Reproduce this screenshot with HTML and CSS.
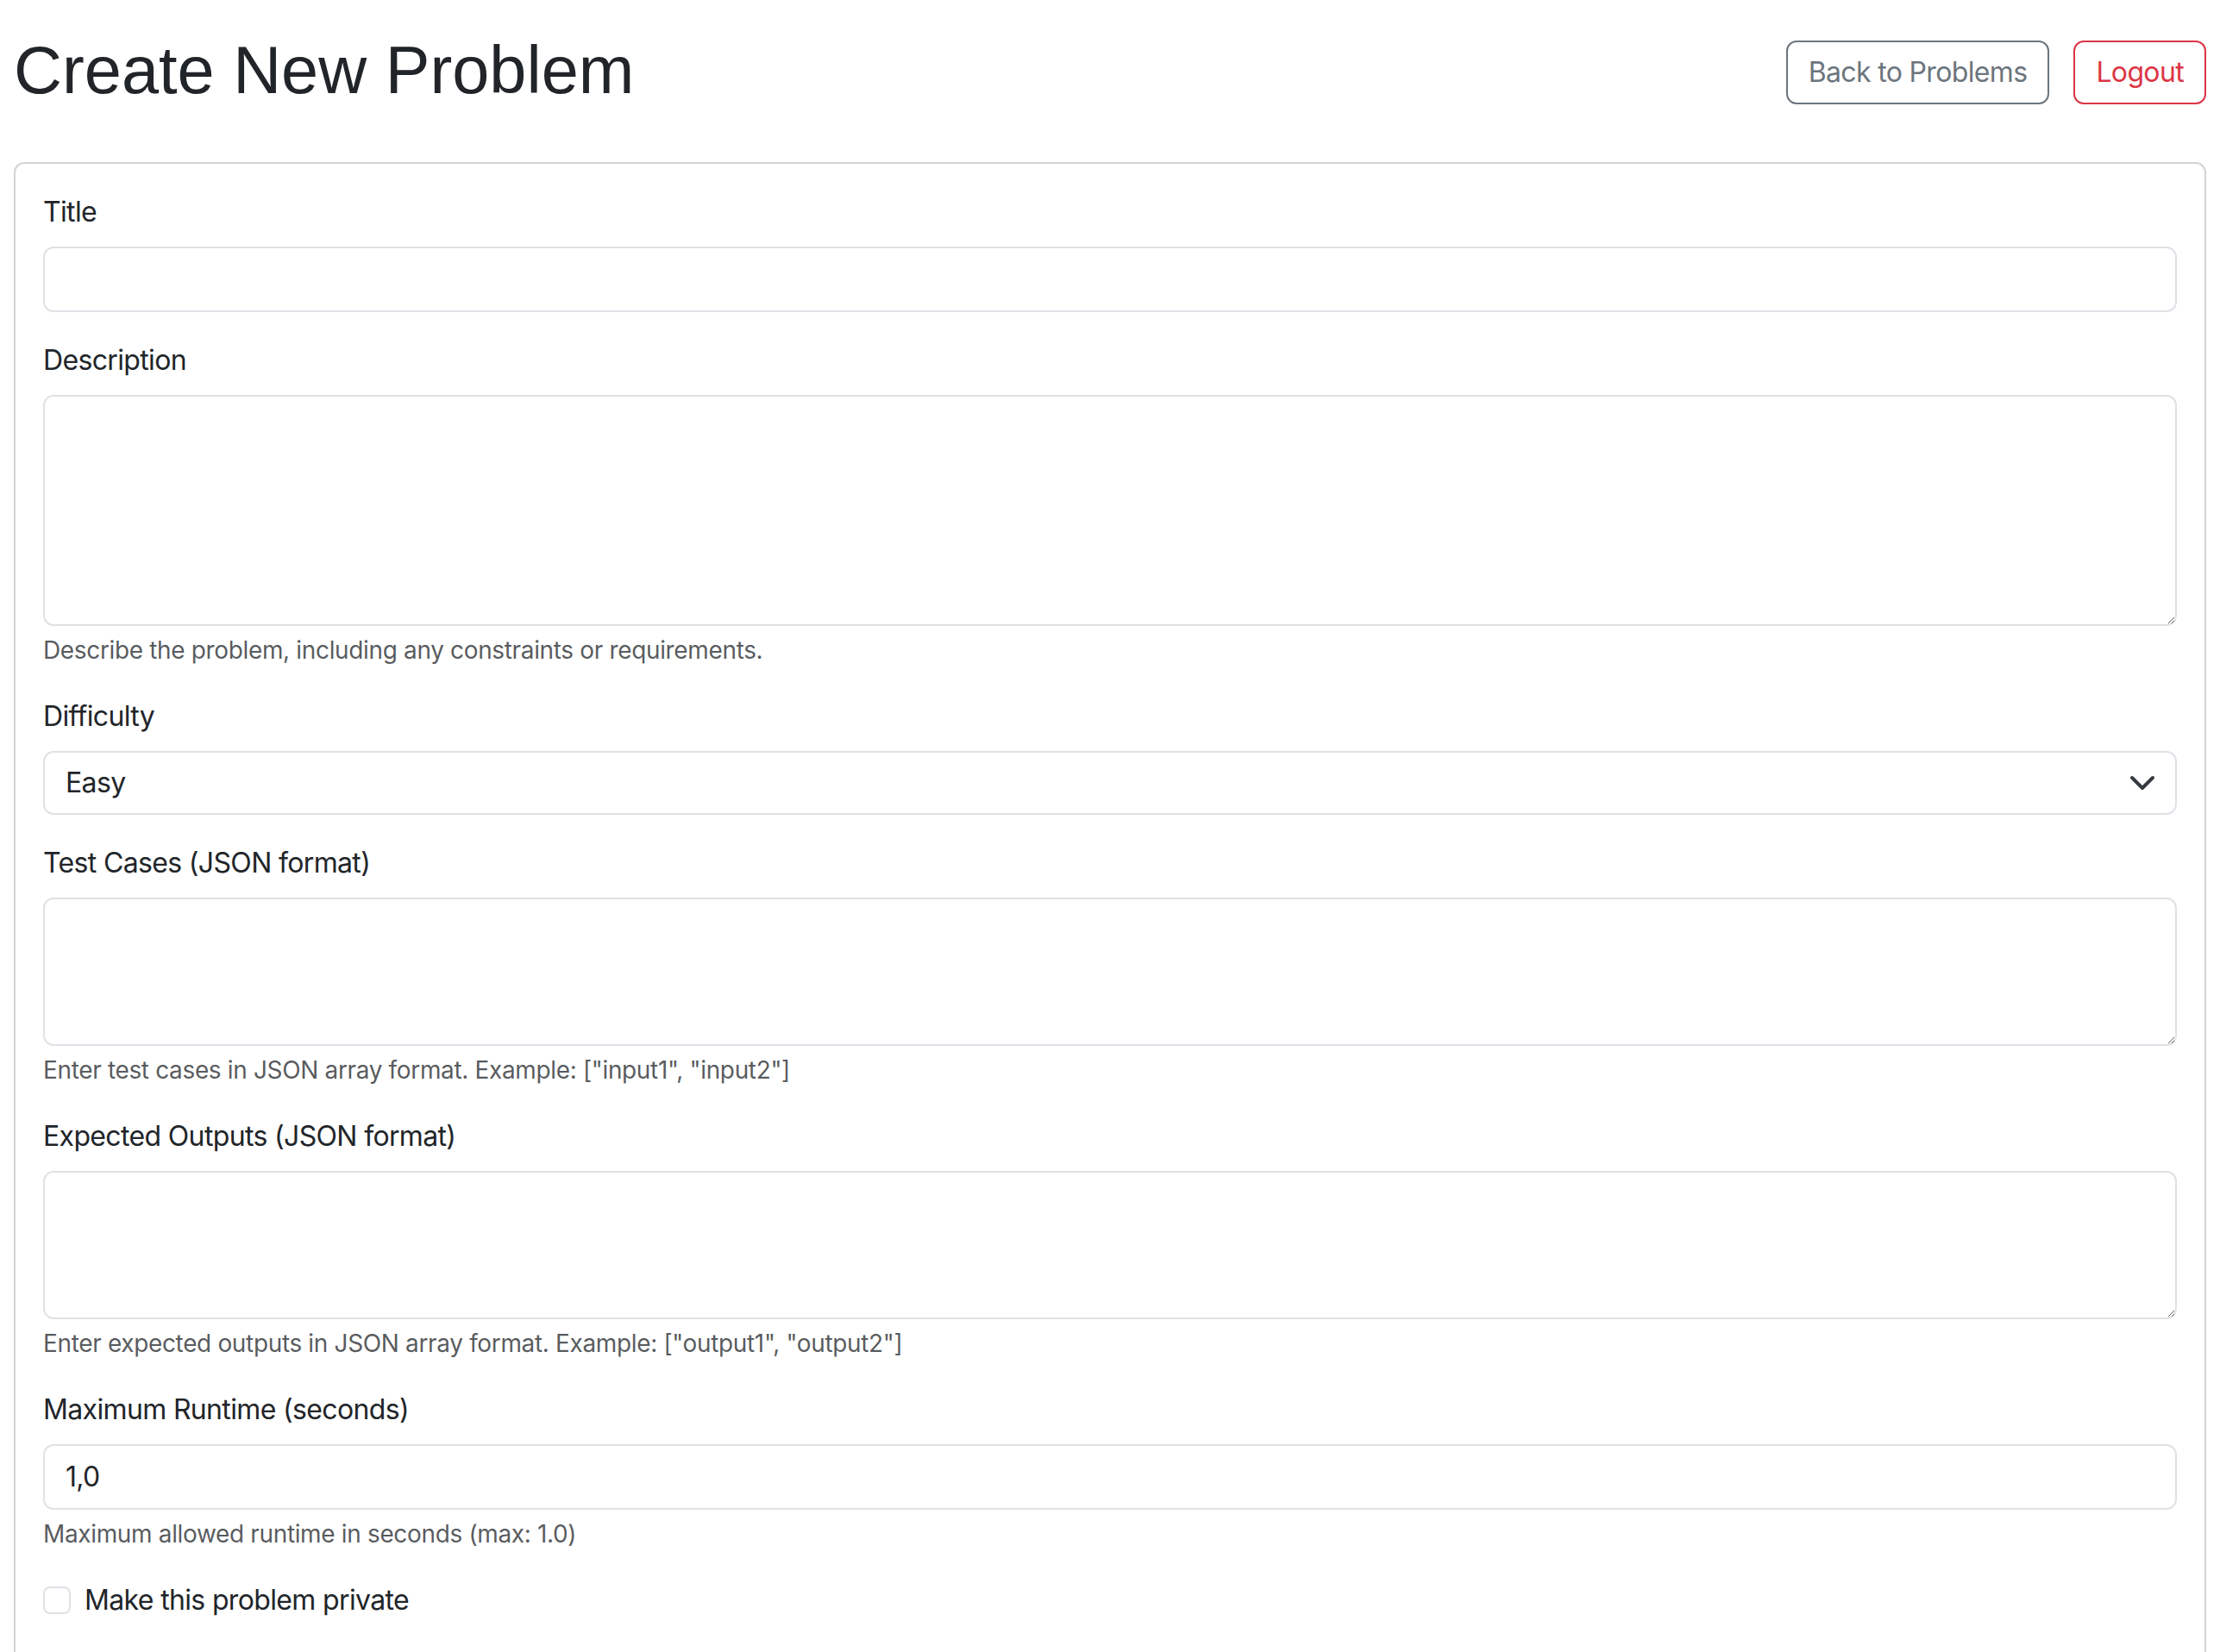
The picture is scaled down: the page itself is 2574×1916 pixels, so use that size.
FILE: index.html
```html
<!DOCTYPE html>
<html lang="en">
<head>
<meta charset="utf-8">
<title>Create New Problem</title>
<link rel="stylesheet" href="styles.css">
</head>
<body>
<div class="page">
  <div class="header">
    <h1 class="page-title">Create New Problem</h1>
    <div class="actions">
      <a class="btn btn-secondary">Back to Problems</a>
      <a class="btn btn-danger">Logout</a>
    </div>
  </div>
  <div class="card">
    <form class="card-body">
      <div class="group">
        <label class="label" for="title">Title</label>
        <input class="control" id="title" type="text">
      </div>
      <div class="group">
        <label class="label" for="desc">Description</label>
        <textarea class="control area" id="desc" rows="5"></textarea>
        <div class="help">Describe the problem, including any constraints or requirements.</div>
      </div>
      <div class="group">
        <label class="label" for="diff">Difficulty</label>
        <div class="select-wrap">
          <select class="control select" id="diff">
            <option>Easy</option>
            <option>Medium</option>
            <option>Hard</option>
          </select>
          <svg class="chevron" viewBox="0 0 16 16" width="32" height="32"><path fill="none" stroke="#343a40" stroke-linecap="round" stroke-linejoin="round" stroke-width="2" d="m2 5 6 6 6-6"/></svg>
        </div>
      </div>
      <div class="group">
        <label class="label" for="tests">Test Cases (JSON format)</label>
        <textarea class="control area" id="tests" rows="3"></textarea>
        <div class="help">Enter test cases in JSON array format. Example: ["input1", "input2"]</div>
      </div>
      <div class="group">
        <label class="label" for="outs">Expected Outputs (JSON format)</label>
        <textarea class="control area" id="outs" rows="3"></textarea>
        <div class="help">Enter expected outputs in JSON array format. Example: ["output1", "output2"]</div>
      </div>
      <div class="group">
        <label class="label" for="runtime">Maximum Runtime (seconds)</label>
        <input class="control" id="runtime" type="text" value="1,0">
        <div class="help">Maximum allowed runtime in seconds (max: 1.0)</div>
      </div>
      <div class="group check">
        <input class="check-input" id="private" type="checkbox">
        <label class="check-label" for="private">Make this problem private</label>
      </div>
      <div class="spacer"></div>
    </form>
  </div>
</div>
</body>
</html>
```
FILE: styles.css
```css
* { box-sizing: border-box; }
html, body { margin: 0; padding: 0; background: #fff; }
body {
  font-family: Inter, "Noto Sans", "Liberation Sans", sans-serif;
  font-size: 32px;
  line-height: 1.5;
  letter-spacing: -0.65px;
  color: #212529;
}
.page { padding: 28px 16px 0 16px; }
.header {
  display: flex;
  justify-content: space-between;
  align-items: center;
  margin-bottom: 48px;
}
.page-title {
  font-family: "Liberation Sans", Arial, sans-serif;
  font-size: 77.5px;
  font-weight: 400;
  line-height: 96px;
  letter-spacing: 0;
  padding-top: 5px;
  margin: 0 0 11px 0;
  color: #212529;
}
.actions { display: flex; gap: 28px; }
.btn {
  display: inline-block;
  font-size: 32px;
  line-height: 48px;
  padding: 11px 24px;
  border: 2px solid;
  border-radius: 12px;
  background: #fff;
  cursor: pointer;
}
.btn-secondary { color: #6c757d; border-color: #6c757d; }
.btn-danger { color: #dc3545; border-color: #dc3545; }
.card {
  border: 2px solid #d3d3d3;
  border-radius: 12px;
  background: #fff;
}
.card-body { padding: 32px; display: block; }
.group { margin-bottom: 32px; }
.label { display: block; margin-bottom: 16px; }
.control {
  display: block;
  width: 100%;
  font-family: inherit;
  font-size: 32px;
  line-height: 48px;
  letter-spacing: -0.65px;
  color: #212529;
  padding: 12px 24px;
  border: 2px solid #dee2e6;
  border-radius: 12px;
  background: #fff;
  margin: 0;
}
.area { resize: vertical; }
.select-wrap { position: relative; }
.select { appearance: none; -webkit-appearance: none; padding-right: 72px; height: 74px; padding-top: 11px; padding-bottom: 11px; }
.chevron { position: absolute; right: 24px; top: 21px; pointer-events: none; }
.help {
  margin-top: 7px;
  font-size: 28px;
  line-height: 42px;
  letter-spacing: -0.35px;
  color: rgba(33, 37, 41, 0.75);
}
.check { display: flex; align-items: flex-start; }
.check-input {
  appearance: none;
  -webkit-appearance: none;
  width: 32px;
  height: 32px;
  margin: 8px 16px 0 0;
  border: 2px solid #dee2e6;
  border-radius: 8px;
  background: #fff;
  flex: none;
}
.check-label { display: block; }
.spacer { height: 120px; }
```
